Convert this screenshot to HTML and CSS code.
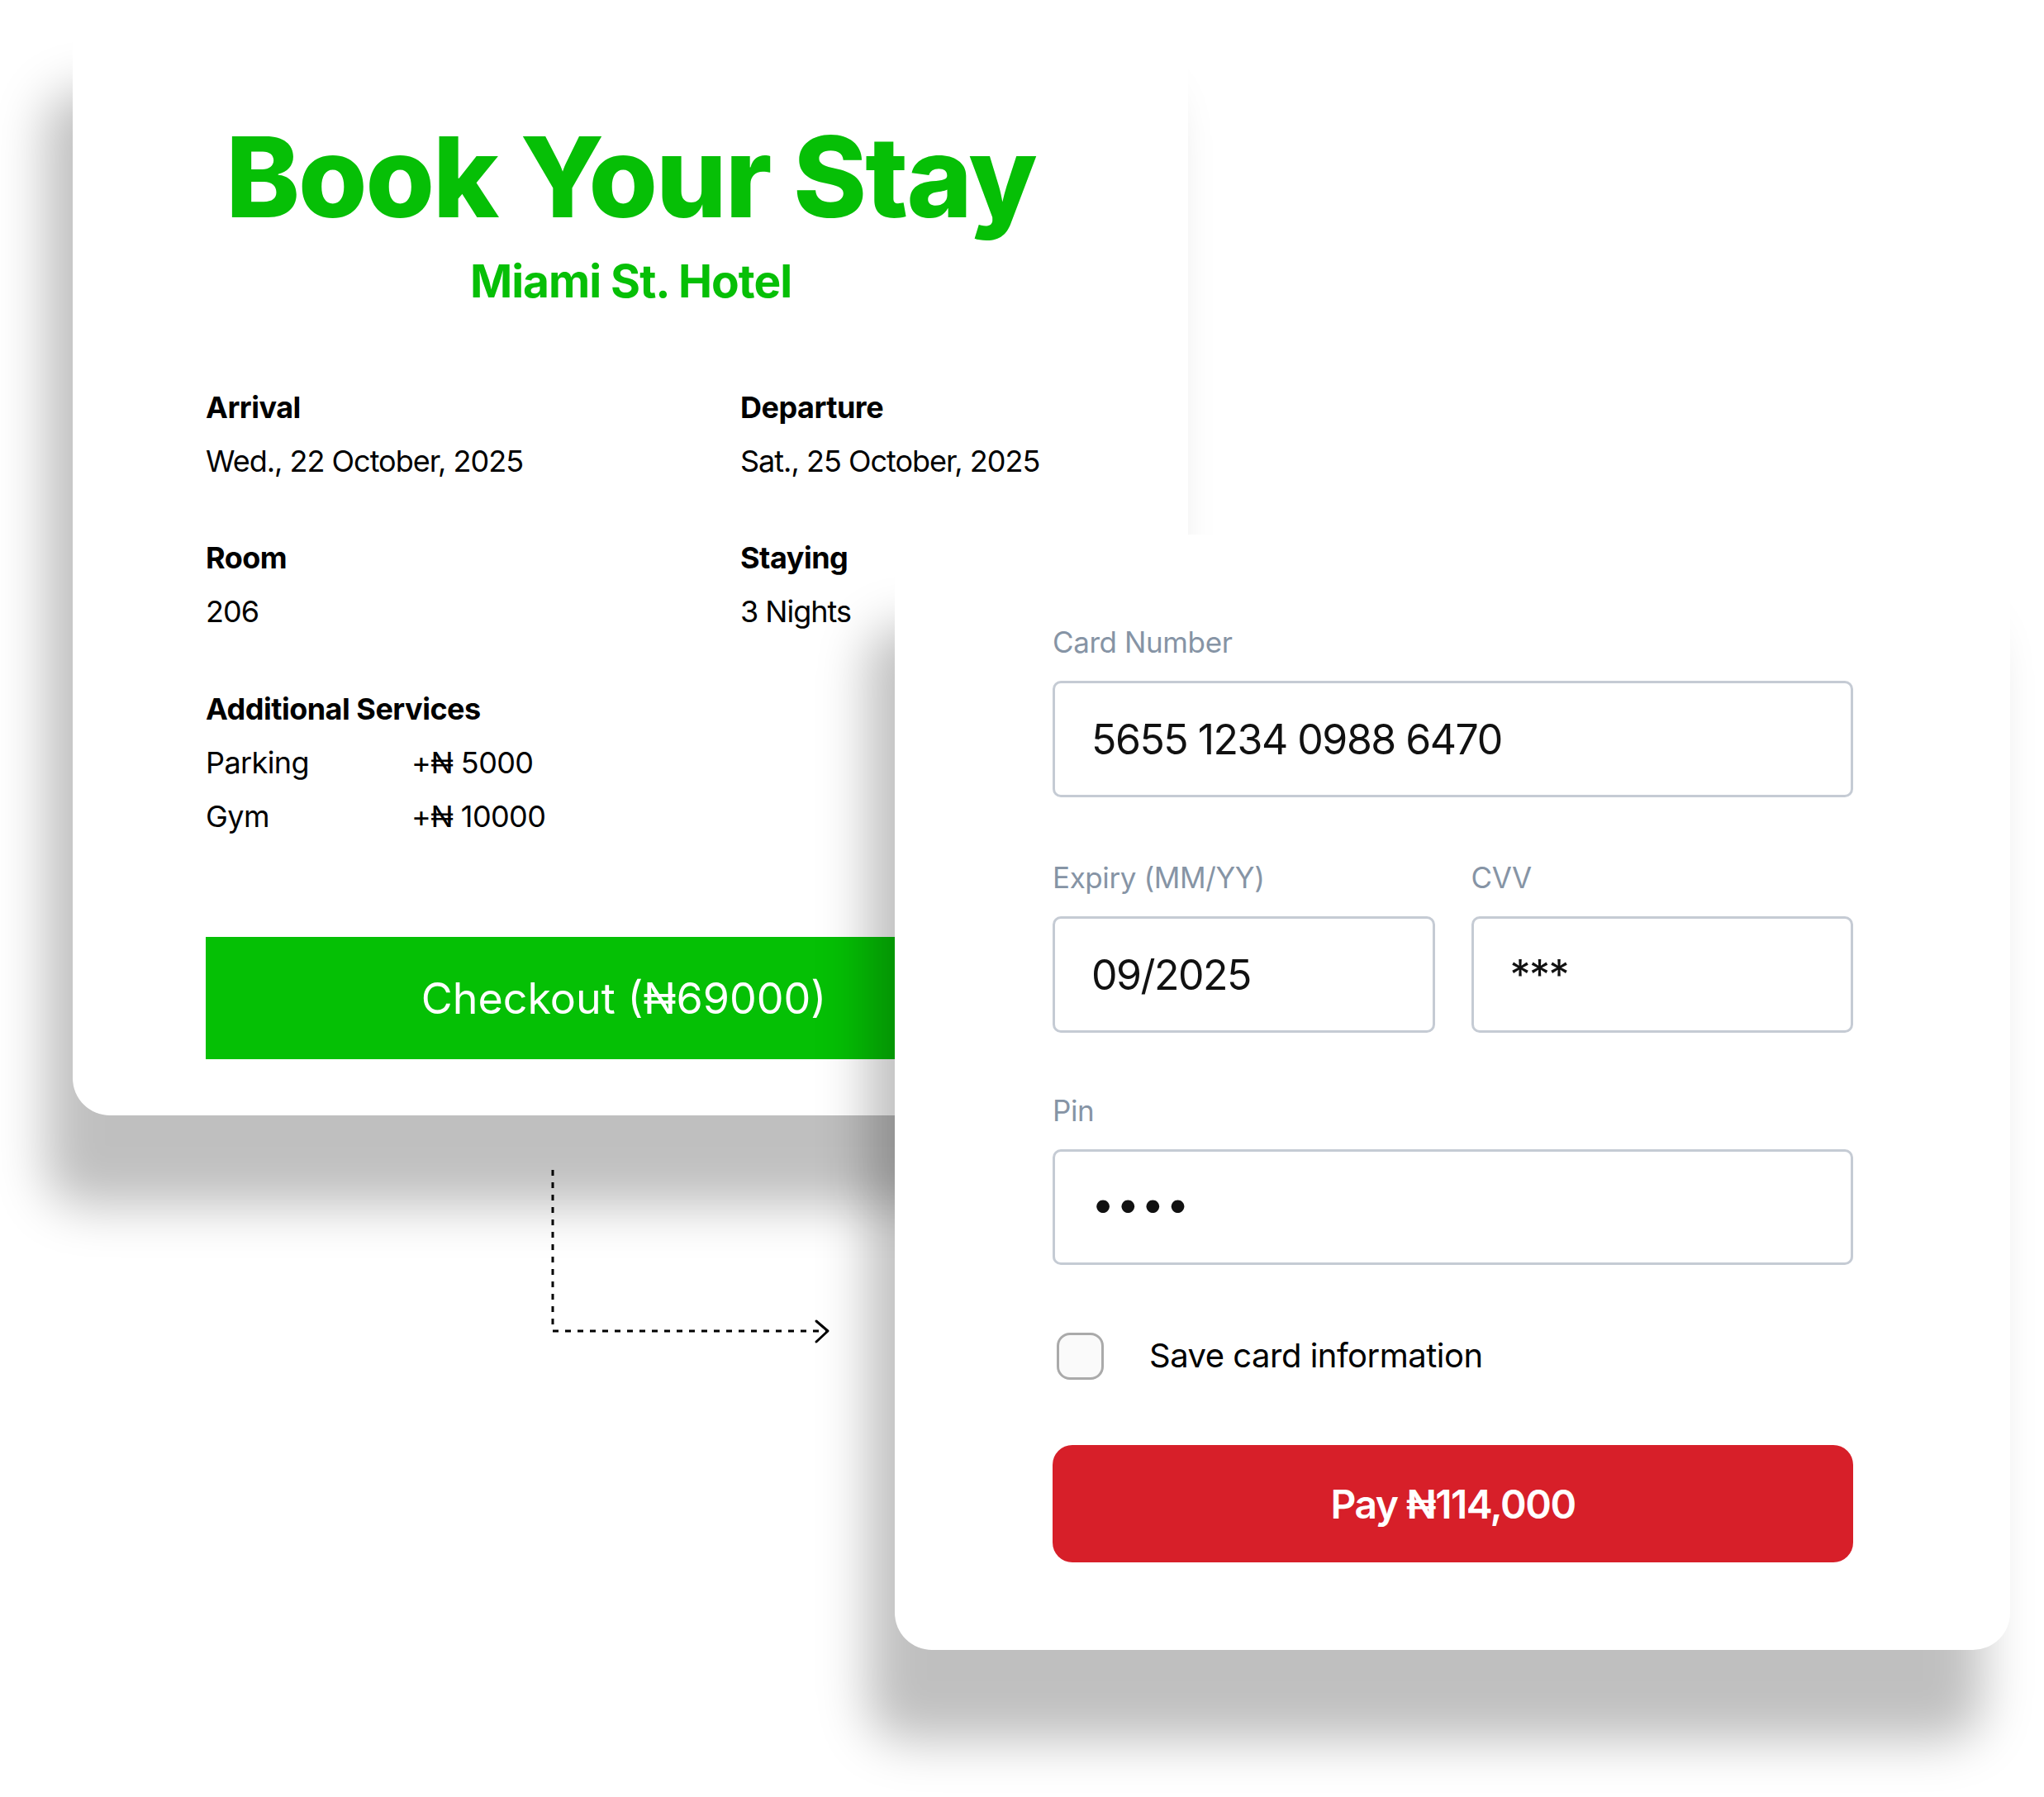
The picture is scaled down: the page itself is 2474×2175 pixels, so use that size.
FILE: index.html
```html
<!DOCTYPE html>
<html>
	<head>
		<meta charset="UTF-8">
		<title>Book Your Stay</title>
		<link rel="stylesheet" href="styles.css">
	</head>
	<body>
		<div class="stage">

			<!--booking summary-->
			<section class="card booking">
				<h1 class="booking-title">Book Your Stay</h1>
				<p class="booking-hotel">Miami St. Hotel</p>

				<div class="details">
					<div class="detail">
						<h3>Arrival</h3>
						<p>Wed., 22 October, 2025</p>
					</div>
					<div class="detail">
						<h3>Departure</h3>
						<p>Sat., 25 October, 2025</p>
					</div>
					<div class="detail">
						<h3>Room</h3>
						<p>206</p>
					</div>
					<div class="detail">
						<h3>Staying</h3>
						<p>3 Nights</p>
					</div>
				</div>

				<div class="services">
					<h3>Additional Services</h3>
					<ul>
						<li><span>Parking</span><span>+₦ 5000</span></li>
						<li><span>Gym</span><span>+₦ 10000</span></li>
					</ul>
				</div>

				<button class="checkout">Checkout (₦69000)</button>
			</section>

			<!--arrow between the two cards-->
			<svg class="connector" width="340" height="215" viewBox="0 0 340 215">
				<path d="M3 2 V197 H334" fill="none" stroke="#000" stroke-width="3" stroke-dasharray="7 8"/>
				<path d="M322 185 L336 197 L322 210" fill="none" stroke="#000" stroke-width="3" stroke-linecap="round" stroke-linejoin="round"/>
			</svg>

			<!--payment form-->
			<section class="card payment">
				<div class="field">
					<label>Card Number</label>
					<div class="field-box">5655 1234 0988 6470</div>
				</div>

				<div class="field-row">
					<div class="field">
						<label>Expiry (MM/YY)</label>
						<div class="field-box">09/2025</div>
					</div>
					<div class="field">
						<label>CVV</label>
						<div class="field-box">***</div>
					</div>
				</div>

				<div class="field">
					<label>Pin</label>
					<div class="field-box pin">••••</div>
				</div>

				<div class="save">
					<span class="checkbox"></span>
					<span>Save card information</span>
				</div>

				<button class="pay">Pay ₦114,000</button>
			</section>

		</div>
	</body>
</html>
```

FILE: styles.css
```css
* {
	margin: 0;
	padding: 0;
	box-sizing: border-box;
}

ul {
	list-style: none;
}

body {
	font-family: Inter, "Noto Sans", sans-serif;
	color: #000;
	background-color: #fff;
}

.stage {
	position: relative;
	width: 2474px;
	height: 2175px;
	overflow: hidden;
}

.card {
	width: 1350px;
	height: 1350px;
	background-color: #fff;
	border-radius: 45px;
	box-shadow: -33px 110px 60px rgba(0, 0, 0, 0.25);
}

/* booking card */
.booking {
	margin-left: 88px;
	padding: 147px 160px 0 161px;
}

.booking-title {
	font-size: 135px;
	line-height: 135px;
	font-weight: 800;
	letter-spacing: -2px;
	text-align: center;
	color: #06bf06;
}

.booking-hotel {
	margin-top: 25px;
	font-size: 55px;
	line-height: 66px;
	font-weight: 700;
	letter-spacing: -1px;
	text-align: center;
	color: #06bf06;
}

.details {
	margin-top: 98px;
	display: grid;
	grid-template-columns: 647px 1fr;
	row-gap: 73px;
	white-space: nowrap;
}

.detail h3,
.services h3 {
	font-size: 36px;
	line-height: 44px;
	font-weight: 700;
	letter-spacing: -0.5px;
}

.detail p {
	margin-top: 21px;
	font-size: 36px;
	line-height: 44px;
	letter-spacing: -1px;
}

.services {
	margin-top: 74px;
}

.services li {
	display: grid;
	grid-template-columns: 249px auto;
	margin-top: 21px;
	font-size: 36px;
	line-height: 44px;
	letter-spacing: -0.6px;
}

.checkout {
	display: block;
	width: 1012px;
	height: 148px;
	margin-top: 124px;
	border: none;
	background-color: #05c005;
	color: #fff;
	font-family: inherit;
	font-size: 52px;
}

.connector {
	position: absolute;
	left: 666px;
	top: 1414px;
}

/* payment card */
.payment {
	position: absolute;
	left: 1083px;
	top: 647px;
	padding: 109px 190px 0 191px;
}

.field label {
	display: block;
	font-size: 35px;
	line-height: 42px;
	letter-spacing: -0.4px;
	color: #8694a5;
}

.field-box {
	display: flex;
	align-items: center;
	height: 141px;
	margin-top: 26px;
	padding-left: 44px;
	border: 3px solid #c5cbd4;
	border-radius: 10px;
	font-size: 50px;
	letter-spacing: -1.5px;
	color: #111;
}

.field-box.pin {
	height: 140px;
	padding-bottom: 8px;
	letter-spacing: 2px;
}

.field-row {
	display: grid;
	grid-template-columns: 1fr 1fr;
	column-gap: 44px;
	margin-top: 76px;
}

.field-row + .field {
	margin-top: 73px;
}

.save {
	display: flex;
	align-items: center;
	gap: 55px;
	margin-top: 81px;
	font-size: 40px;
	line-height: 58px;
	letter-spacing: -0.5px;
}

.checkbox {
	width: 57px;
	height: 57px;
	margin-left: 5px;
	border: 3px solid #aaa;
	border-radius: 16px;
	background-color: #fafafa;
}

.pay {
	display: block;
	width: 100%;
	height: 142px;
	margin-top: 79px;
	border: none;
	border-radius: 24px;
	background-color: #d71f29;
	color: #fff;
	font-family: inherit;
	font-size: 48px;
	font-weight: 600;
	letter-spacing: -1.5px;
}
```
